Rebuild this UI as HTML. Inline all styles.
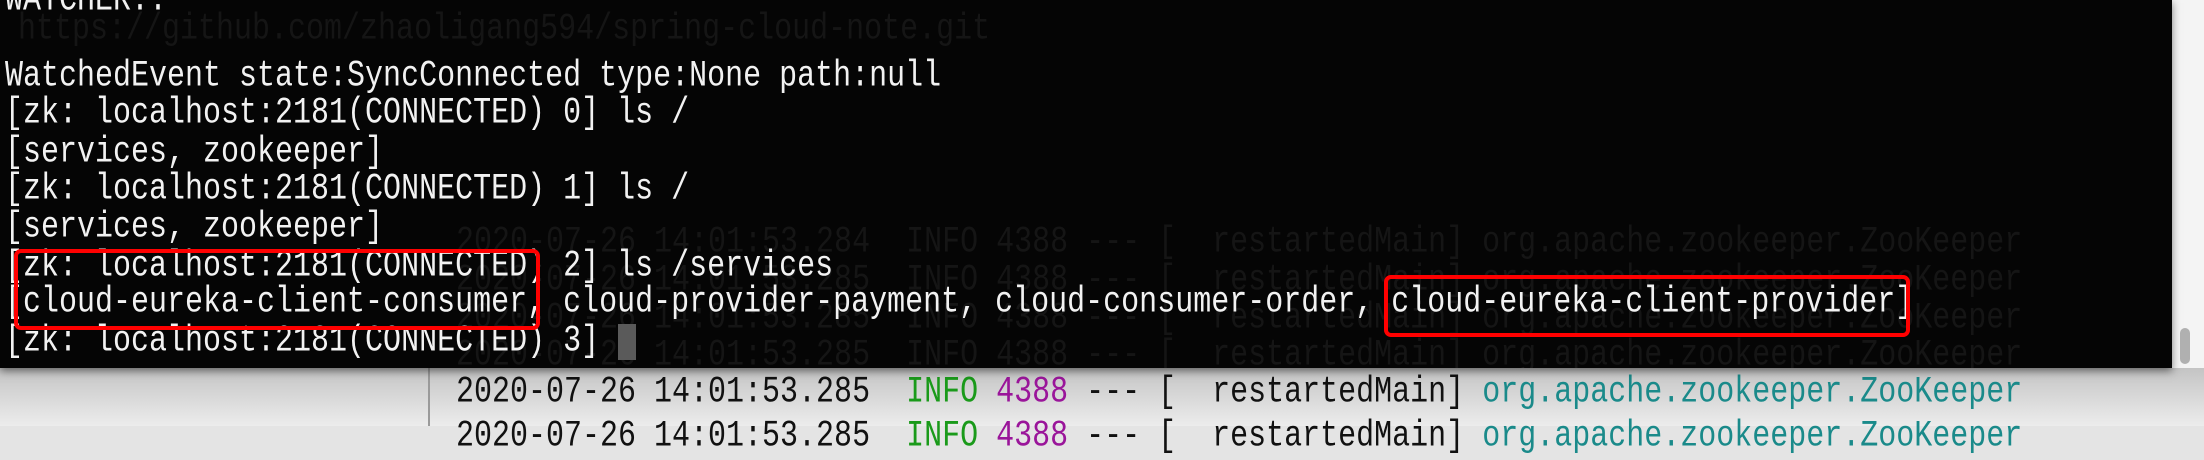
<!DOCTYPE html>
<html><head><meta charset="utf-8"><style>
html,body{margin:0;padding:0;width:2204px;height:426px;overflow:hidden;background:#e4e4e4;font-family:"Liberation Mono",monospace;}
.bot{position:absolute;left:0;top:368px;width:2204px;height:58px;background:linear-gradient(#c4c4c4,#ececec);}
.div{position:absolute;left:428px;top:368px;width:2px;height:58px;background:#9a9a9a;}
.term{position:absolute;left:0;top:0;width:2172px;height:368px;background:#050505;box-shadow:0 3px 8px rgba(0,0,0,.5);overflow:hidden;}
.ln{position:absolute;font-size:30px;line-height:38px;white-space:pre;color:#f2f2f2;transform:scaleY(1.22);transform-origin:left center;}
.g{color:#151515;}
.log{color:#111;}
.box{position:absolute;border:4px solid #ff0000;border-radius:7px;box-sizing:border-box;}
.cur{position:absolute;left:618px;top:324px;width:18px;height:36px;background:#5a5a5a;}
.sb{position:absolute;left:2180px;top:328px;width:10px;height:36px;border-radius:5px;background:#b0b0b0;}
.rt{position:absolute;left:2172px;top:0;width:32px;height:368px;background:#f4f4f4;}
</style></head><body>
<div class="bot"></div><div class="div"></div>
<div class="ln log" style="left:456px;top:374px">2020-07-26 14:01:53.285  <span style="color:#1a9a1a">INFO</span> <span style="color:#9a159a">4388</span> --- [  restartedMain] <span style="color:#1a8a8a">org.apache.zookeeper.ZooKeeper</span></div>
<div class="ln log" style="left:456px;top:418px">2020-07-26 14:01:53.285  <span style="color:#1a9a1a">INFO</span> <span style="color:#9a159a">4388</span> --- [  restartedMain] <span style="color:#1a8a8a">org.apache.zookeeper.ZooKeeper</span></div>
<div class="rt"></div>
<div class="term">
<div class="ln g" style="left:18px;top:11px">https://github.com/zhaoligang594/spring-cloud-note.git</div>
<div class="ln g" style="left:456px;top:224px">2020-07-26 14:01:53.284  INFO 4388 --- [  restartedMain] org.apache.zookeeper.ZooKeeper</div>
<div class="ln g" style="left:456px;top:262px">2020-07-26 14:01:53.285  INFO 4388 --- [  restartedMain] org.apache.zookeeper.ZooKeeper</div>
<div class="ln g" style="left:456px;top:300px">2020-07-26 14:01:53.285  INFO 4388 --- [  restartedMain] org.apache.zookeeper.ZooKeeper</div>
<div class="ln g" style="left:456px;top:337px">2020-07-26 14:01:53.285  INFO 4388 --- [  restartedMain] org.apache.zookeeper.ZooKeeper</div>
<div class="ln" style="left:5px;top:-18px">WATCHER::</div>
<div class="ln" style="left:5px;top:58px">WatchedEvent state:SyncConnected type:None path:null</div>
<div class="ln" style="left:5px;top:95px">[zk: localhost:2181(CONNECTED) 0] ls /</div>
<div class="ln" style="left:5px;top:134px">[services, zookeeper]</div>
<div class="ln" style="left:5px;top:171px">[zk: localhost:2181(CONNECTED) 1] ls /</div>
<div class="ln" style="left:5px;top:209px">[services, zookeeper]</div>
<div class="ln" style="left:5px;top:248px">[zk: localhost:2181(CONNECTED) 2] ls /services</div>
<div class="ln" style="left:5px;top:284px">[cloud-eureka-client-consumer, cloud-provider-payment, cloud-consumer-order, cloud-eureka-client-provider]</div>
<div class="ln" style="left:5px;top:323px">[zk: localhost:2181(CONNECTED) 3] </div>
<div class="cur"></div>
</div>
<div class="sb"></div>
<div class="box" style="left:14px;top:249px;width:526px;height:81px"></div>
<div class="box" style="left:1384px;top:275px;width:526px;height:62px"></div>
</body></html>
